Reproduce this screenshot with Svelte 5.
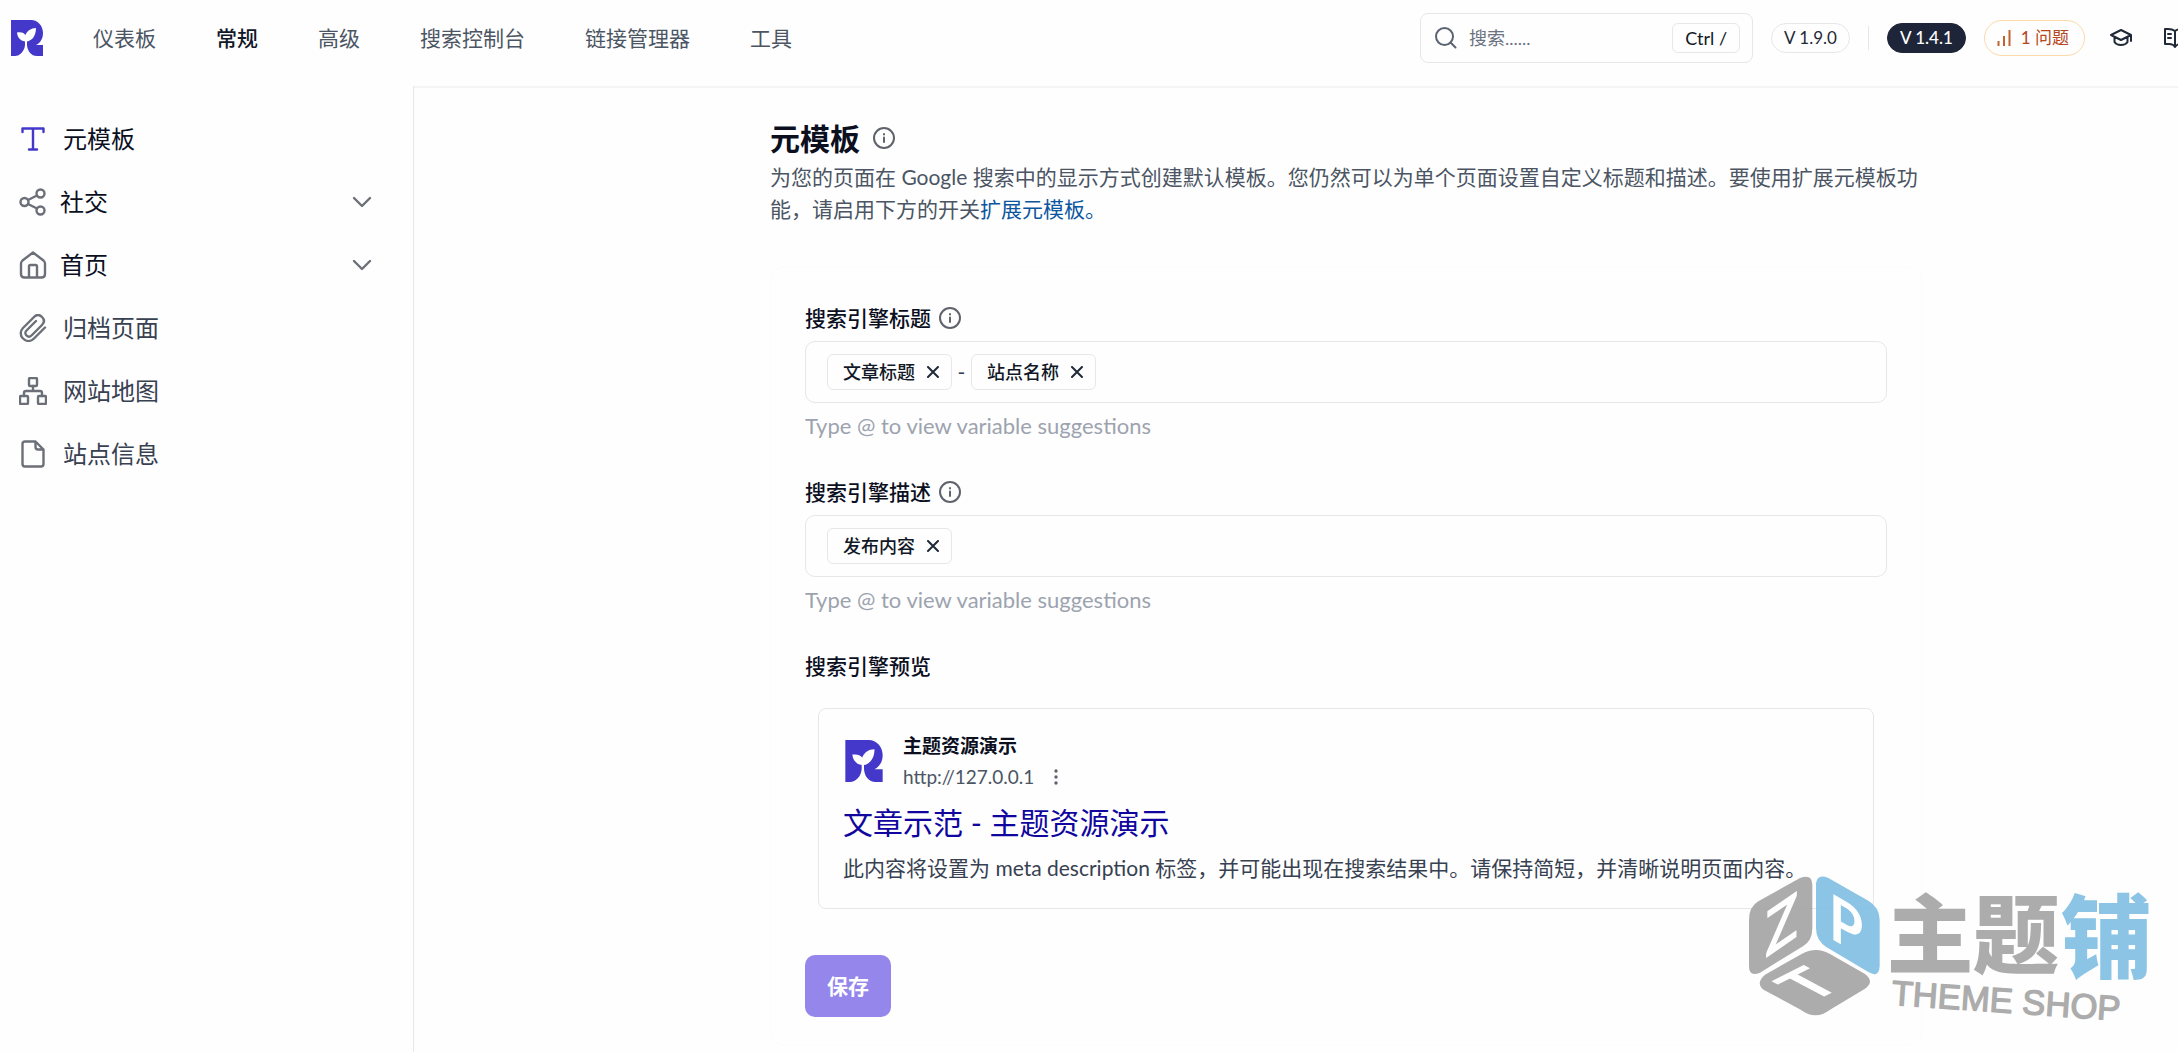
<script lang="ts">
  type Token = { id: number; text: string };

  const nav = ['仪表板', '常规', '高级', '搜索控制台', '链接管理器', '工具'];
  const menu = [
    { label: '元模板', icon: 'type' },
    { label: '社交', icon: 'share', group: true },
    { label: '首页', icon: 'home', group: true },
    { label: '归档页面', icon: 'clip' },
    { label: '网站地图', icon: 'sitemap' },
    { label: '站点信息', icon: 'file' }
  ];

  let activeNav = $state('常规');
  let activeMenu = $state('元模板');
  let search = $state('');

  let fields = $state<{ id: string; label: string; tokens: Token[] }[]>([
    {
      id: 'seo-title',
      label: '搜索引擎标题',
      tokens: [
        { id: 1, text: '文章标题' },
        { id: 2, text: '站点名称' }
      ]
    },
    {
      id: 'seo-description',
      label: '搜索引擎描述',
      tokens: [{ id: 3, text: '发布内容' }]
    }
  ]);

  function removeToken(field: { tokens: Token[] }, id: number) {
    field.tokens = field.tokens.filter((t) => t.id !== id);
  }
</script>

{#snippet logo()}
  <svg class="logo" viewBox="0 0 32 36" aria-hidden="true">
    <path
      fill="#4338ca"
      fill-rule="evenodd"
      d="M0 0H20C27 0 32 6 32 13C32 19 29 23 25 25H32V36H26C20 36 16.500 31 16 25V21.500C21 20.500 25 16 25 8C20 8 16 11 14.500 15C12.500 12.500 10 12 6 12.500C6.500 17.500 9 20.500 14 21.500V25C13.500 31 9 36 4 36H0Z"
    />
  </svg>
{/snippet}

{#snippet info()}
  <svg class="info" viewBox="0 0 22 22" aria-hidden="true">
    <circle cx="11" cy="11" r="10" />
    <path d="M11 10.500V15M11 7V7.500" />
  </svg>
{/snippet}

<div class="app">
  <header>
    <a class="brand" href="#home" aria-label="首页">{@render logo()}</a>
    <nav class="top-nav">
      {#each nav as item}
        <a
          href="#{item}"
          class:active={activeNav === item}
          onclick={() => (activeNav = item)}>{item}</a
        >
      {/each}
    </nav>

    <label class="search">
      <svg viewBox="0 0 22 22" aria-hidden="true">
        <circle cx="9.500" cy="9.500" r="8.500" />
        <path d="M15.500 15.500L20.500 20.500" />
      </svg>
      <input type="text" placeholder="搜索......" aria-label="搜索" bind:value={search} />
      <kbd>Ctrl /</kbd>
    </label>

    <div class="status">
      <span class="pill">V 1.9.0</span>
      <span class="divider"></span>
      <span class="pill dark">V 1.4.1</span>
      <button class="issues" type="button">
        <svg viewBox="0 0 14 16" aria-hidden="true">
          <path d="M1.500 11V16M7 6V16M12.500 0V16" />
        </svg>
        1 问题
      </button>
      <a class="tool" href="#learn" aria-label="教程">
        <svg viewBox="0 0 22 18" aria-hidden="true">
          <path d="M11 1L21 6L11 11L1 6ZM4.500 8V13C7 17 15 17 17.500 13V8M21 6V12" />
        </svg>
      </a>
      <a class="tool docs" href="#docs" aria-label="文档">
        <svg viewBox="0 0 22 20" aria-hidden="true">
          <path
            d="M11 3C9 1.500 7 1 4 1H1V16H5C8 16 10 17 11 19C12 17 14 16 17 16H21V1H18C15 1 13 1.500 11 3ZM11 3V19M4 6H7M4 10H7M15 6H18M15 10H18"
          />
        </svg>
      </a>
    </div>
  </header>

  <div class="body">
    <aside>
      {#each menu as item}
        <button
          type="button"
          class="menu-item"
          class:active={activeMenu === item.label}
          class:group={item.group}
          onclick={() => (activeMenu = item.label)}
        >
          <svg class="menu-icon" viewBox="0 0 28 28" aria-hidden="true">
            {#if item.icon === 'type'}
              <path d="M3.500 7V3.500H24.500V7M14 3.500V24.500M10 24.500H18" />
            {:else if item.icon === 'share'}
              <circle cx="5.500" cy="14" r="4" />
              <circle cx="21.500" cy="5.500" r="4" />
              <circle cx="21.500" cy="22.500" r="4" />
              <path d="M9 12L18 7.500M9 16L18 20.500" />
            {:else if item.icon === 'home'}
              <path
                d="M2 12.500C2 11 2.500 10.500 3.500 9.500L14 1.500L24.500 9.500C25.500 10.500 26 11 26 12.500V23C26 25.500 25 26.500 22.500 26.500H5.500C3 26.500 2 25.500 2 23ZM10 26V15.500C10 14.500 10.500 14 11.500 14H16.500C17.500 14 18 14.500 18 15.500V26"
              />
            {:else if item.icon === 'clip'}
              <path
                d="M26 13.500L15 24.500C11.500 28 7 27.500 4 24.500C1 21.500 1 17 4 14L15 3C17.500 0.500 20.500 0.500 23 3C25.500 5.500 25.500 8.500 23 11L12.500 21.500C11 23 9 23 7.500 21.500C6 20 6 18 7.500 16.500L17 7"
              />
            {:else if item.icon === 'sitemap'}
              <rect x="10" y="1" width="8" height="8" rx="1" />
              <rect x="1" y="19" width="8" height="8" rx="1" />
              <rect x="19" y="19" width="8" height="8" rx="1" />
              <path d="M14 9V14M5 19V16C5 14.500 5.500 14 7 14H21C22.500 14 23 14.500 23 16V19" />
            {:else}
              <path
                d="M16 1.500H6C4 1.500 3.500 2.500 3.500 4V24C3.500 26 4.500 26.500 6 26.500H22C24 26.500 24.500 25.500 24.500 24V9.500L16.500 1.500V7C16.500 9 17 9.500 19 9.500H24.500"
              />
            {/if}
          </svg>
          <span>{item.label}</span>
          {#if item.group}
            <svg class="chevron" viewBox="0 0 20 12" aria-hidden="true">
              <path d="M2 2L10 10L18 2" />
            </svg>
          {/if}
        </button>
      {/each}
    </aside>

    <main>
      <h1>元模板 {@render info()}</h1>
      <p class="intro">
        为您的页面在 Google
        搜索中的显示方式创建默认模板。您仍然可以为单个页面设置自定义标题和描述。要使用扩展元模板功能，请启用下方的开关<a
          href="#extended">扩展元模板。</a
        >
      </p>

      <form onsubmit={(e) => e.preventDefault()}>
        {#each fields as field}
          <div class="field">
            <label class="field-label" for={field.id}>{field.label} {@render info()}</label>
            <div class="token-box">
              {#each field.tokens as token, i (token.id)}
                {#if i > 0}<span class="dash">-</span>{/if}
                <span class="token">
                  {token.text}
                  <button
                    type="button"
                    aria-label="移除 {token.text}"
                    onclick={() => removeToken(field, token.id)}
                  >
                    <svg viewBox="0 0 12 12" aria-hidden="true">
                      <path d="M1 1L11 11M11 1L1 11" />
                    </svg>
                  </button>
                </span>
              {/each}
              <input id={field.id} type="text" />
            </div>
            <p class="hint">Type @ to view variable suggestions</p>
          </div>
        {/each}

        <h2>搜索引擎预览</h2>
        <section class="preview">
          <div class="site">
            {@render logo()}
            <div>
              <strong>主题资源演示</strong>
              <div class="url">
                http://127.0.0.1
                <svg viewBox="0 0 4 16" aria-hidden="true">
                  <circle cx="2" cy="2" r="1.700" />
                  <circle cx="2" cy="8" r="1.700" />
                  <circle cx="2" cy="14" r="1.700" />
                </svg>
              </div>
            </div>
          </div>
          <a class="result-title" href="#preview">文章示范 - 主题资源演示</a>
          <p>
            此内容将设置为 meta description 标签，并可能出现在搜索结果中。请保持简短，并清晰说明页面内容。
          </p>
        </section>

        <button class="save" type="submit">保存</button>
      </form>
    </main>
  </div>

  <svg class="watermark" viewBox="30 90 1260 480" role="img" aria-label="主题铺 THEME SHOP">
    <g fill="#a6a6a6">
      <path
        d="M57 240Q57 200 85 184L210 114Q247 100 247 135V265Q247 302 220 318L90 398Q57 412 57 378Z"
      />
      <path
        d="M105 404L215 342Q257 318 300 342L405 402Q435 425 405 446L300 509Q257 542 212 509L102 450Q75 430 105 404Z"
      />
    </g>
    <path
      fill="#83c0e4"
      d="M258 130Q262 100 295 114L415 182Q449 202 449 240V378Q447 415 415 396L290 322Q258 302 258 265Z"
    />
    <!-- each letter lies on its own face of the cube -->
    <g class="cube-letters" fill="#fff" text-anchor="middle">
      <text transform="matrix(0.87 -0.6 0 1 155 322)">Z</text>
      <text transform="matrix(0.87 0.5 0 1 348 322)">P</text>
      <text transform="matrix(0.89 -0.45 0.88 0.47 294 464)">T</text>
    </g>
    <g class="mark-cjk">
      <text x="470" y="382" fill="#a6a6a6">主</text>
      <text x="728" y="382" fill="#a6a6a6">题</text>
      <text class="mark-shop" x="992" y="394" fill="#83c0e4">铺</text>
    </g>
    <text class="mark-latin" fill="#a6a6a6" stroke="#a6a6a6" transform="translate(483 494) rotate(4)"
      >THEME SHOP</text
    >
  </svg>
</div>

<style>
  :global(body) {
    background: #fefefe;
  }

  .app {
    position: relative;
    min-height: 100vh;
    display: flex;
    flex-direction: column;
    overflow: hidden;
    font-family: Lato, 'Noto Sans CJK SC', sans-serif;
    font-size: 21px;
    line-height: 32px;
    color: #374151;
  }

  .app * {
    box-sizing: border-box;
  }

  svg {
    fill: none;
    stroke-linecap: round;
    stroke-linejoin: round;
    flex: none;
  }

  a {
    text-decoration: none;
  }

  button,
  input {
    font: inherit;
    color: inherit;
    background: none;
    border: 0;
    padding: 0;
  }

  button {
    cursor: pointer;
  }

  header {
    display: flex;
    align-items: center;
    height: 86px;
    padding: 0 0 10px 11px;
  }

  .brand {
    display: flex;
    margin-right: 50px;
  }

  .logo {
    width: 32px;
    height: 36px;
  }

  .top-nav {
    display: flex;
    gap: 60px;
  }

  .top-nav a {
    color: #4b5563;
    white-space: nowrap;
  }

  .top-nav a.active {
    color: #111827;
    font-weight: 500;
  }

  .search {
    display: flex;
    align-items: center;
    width: 333px;
    height: 50px;
    margin-left: auto;
    padding: 0 12px 0 14px;
    border: 1px solid #e5e7eb;
    border-radius: 8px;
    font-size: 18px;
  }

  .search svg {
    width: 22px;
    height: 22px;
    stroke: #5b6270;
    stroke-width: 2;
  }

  .search input {
    flex: 1;
    min-width: 0;
    margin-left: 12px;
    outline: none;
  }

  .search input::placeholder {
    color: #6b7280;
    opacity: 1;
  }

  kbd {
    display: flex;
    align-items: center;
    height: 30px;
    padding: 0 12px;
    border: 1px solid #e5e7eb;
    border-radius: 6px;
    font-family: inherit;
    font-size: 18px;
    color: #111827;
  }

  .status {
    display: flex;
    align-items: center;
    gap: 18px;
    margin-left: 18px;
    font-size: 17px;
  }

  .pill {
    display: flex;
    align-items: center;
    height: 30px;
    padding: 0 12px;
    border: 1px solid #e5e7eb;
    border-radius: 15px;
    color: #1f2937;
    white-space: nowrap;
  }

  .pill.dark {
    background: #1e2538;
    border-color: #1e2538;
    color: #fff;
    font-weight: 500;
  }

  .divider {
    width: 1px;
    height: 24px;
    background: #e5e7eb;
  }

  .issues {
    display: flex;
    align-items: center;
    gap: 10px;
    height: 36px;
    padding: 0 15px 0 12px;
    border: 1px solid #fbd9a8;
    border-radius: 18px;
    color: #b5451b;
    white-space: nowrap;
  }

  .issues svg {
    width: 14px;
    height: 16px;
    stroke: #c2622f;
    stroke-width: 2;
    stroke-linecap: butt;
  }

  .tool {
    display: flex;
    margin-left: 7px;
  }

  .tool svg {
    width: 22px;
    height: 18px;
    stroke: #1f2937;
    stroke-width: 2;
  }

  .docs {
    width: 14px;
    margin-left: 14px;
    overflow: hidden;
  }

  .docs svg {
    height: 20px;
  }

  .body {
    flex: 1;
    display: flex;
  }

  aside {
    flex: none;
    width: 414px;
    padding: 21px 41px 0 19px;
    border-right: 1px solid #e5e7eb;
  }

  .menu-item {
    display: flex;
    align-items: center;
    gap: 16px;
    width: 100%;
    height: 63px;
    font-size: 24px;
    color: #374151;
  }

  .menu-item.group {
    gap: 13px;
  }

  .menu-item.active,
  .menu-item.group {
    color: #0b0f1e;
  }

  .menu-icon {
    width: 28px;
    height: 28px;
    stroke: #6b7078;
    stroke-width: 2.400;
  }

  .active .menu-icon {
    stroke: #4338ca;
  }

  .chevron {
    width: 20px;
    height: 12px;
    margin-left: auto;
    stroke: #6b7078;
    stroke-width: 2.400;
  }

  main {
    flex: 1;
    min-width: 0;
    padding: 29px 256px 0 356px;
    border-top: 2px solid #f3f4f6;
  }

  h1 {
    display: flex;
    align-items: center;
    gap: 13px;
    margin: 0;
    font-size: 30px;
    line-height: 42px;
    font-weight: 700;
    color: #0b0f1e;
  }

  .info {
    width: 22px;
    height: 22px;
    stroke: #5f636b;
    stroke-width: 2;
  }

  .intro {
    margin: 2px 0 0;
    color: #4b5563;
  }

  .intro a {
    color: #0b559f;
  }

  form {
    margin-top: 41px;
    padding: 35px 34px 28px;
    border: 1px solid #fcfcfd;
    border-radius: 16px;
  }

  .field {
    height: 174px;
  }

  .field-label,
  h2 {
    display: flex;
    align-items: center;
    gap: 8px;
    height: 32px;
    margin: 0;
    font-size: 21px;
    font-weight: 500;
    color: #0b0f1e;
  }

  .token-box {
    display: flex;
    align-items: center;
    height: 62px;
    margin-top: 7px;
    padding: 0 21px;
    border: 1px solid #e5e7eb;
    border-radius: 10px;
  }

  .token-box input {
    flex: 1;
    min-width: 0;
    outline: none;
  }

  .token {
    display: flex;
    align-items: center;
    gap: 12px;
    height: 36px;
    padding: 0 12px 0 15px;
    border: 1px solid #e5e7eb;
    border-radius: 6px;
    font-size: 18px;
    font-weight: 500;
    color: #111827;
  }

  .token button {
    display: flex;
  }

  .token svg {
    width: 12px;
    height: 12px;
    stroke: #1f2937;
    stroke-width: 2;
  }

  .dash {
    width: 19px;
    text-align: center;
  }

  .hint {
    margin: 7px 0 0;
    font-size: 22px;
    color: #9ca3af;
  }

  .preview {
    display: flex;
    flex-direction: column;
    align-items: flex-start;
    height: 201px;
    margin: 26px 13px 0;
    padding: 21px 24px;
    border: 1px solid #e5e7eb;
    border-radius: 8px;
  }

  .site {
    display: flex;
    align-items: center;
    gap: 20px;
    padding-left: 2px;
  }

  .site .logo {
    width: 38px;
    height: 42px;
  }

  .site strong {
    display: block;
    font-size: 19px;
    font-weight: 700;
    color: #0b0f1e;
  }

  .url {
    display: flex;
    align-items: center;
    gap: 20px;
    font-size: 19px;
    line-height: 30px;
    color: #4b5563;
  }

  .url svg {
    width: 4px;
    height: 16px;
    fill: #5f636b;
  }

  .result-title {
    font-size: 30px;
    line-height: 44px;
    margin-top: 8px;
    color: #10069f;
  }

  .preview p {
    margin: 8px 0 0;
    color: #374151;
  }

  .save {
    display: block;
    height: 62px;
    margin-top: 46px;
    padding: 0 22px;
    border-radius: 10px;
    background: #9486ea;
    color: #fff;
    font-weight: 700;
  }

  .watermark {
    position: absolute;
    right: 18px;
    bottom: 22px;
    width: 420px;
    height: 160px;
    opacity: 0.93;
    overflow: visible;
    pointer-events: none;
  }

  .cube-letters {
    font-family: Lato, sans-serif;
    font-size: 190px;
    font-weight: 700;
  }

  .mark-cjk {
    font-family: 'Noto Sans CJK SC', sans-serif;
    font-size: 260px;
    font-weight: 900;
  }

  .mark-shop {
    font-size: 274px;
  }

  .mark-latin {
    font-family: 'Liberation Sans', sans-serif;
    font-size: 104px;
    stroke-width: 4px;
  }
</style>
